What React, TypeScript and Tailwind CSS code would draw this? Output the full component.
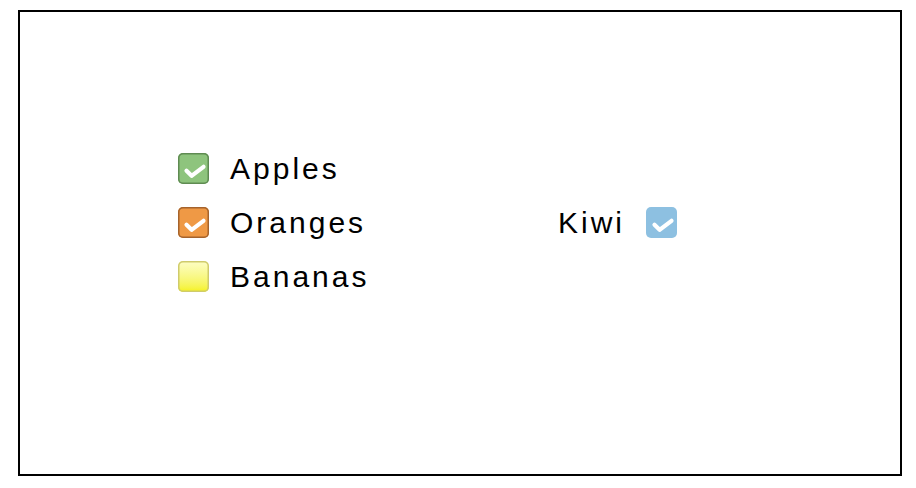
import React from 'react';

type Fruit = {
    label: string;
    checked: boolean;
    box: string;
};

const LEFT: Fruit[] = [
    { label: 'Apples', checked: true, box: 'shadow-[inset_0_0_0_1.5px_#5f8b52] bg-[#8ec47d]' },
    { label: 'Oranges', checked: true, box: 'shadow-[inset_0_0_0_1.5px_#a5632c] bg-[#ef9945]' },
    { label: 'Bananas', checked: false, box: 'shadow-[inset_0_0_0_1.5px_#cfcb6c] bg-gradient-to-b from-[#fdfdc4] to-[#f5f200]' },
];

// white tick drawn over the coloured box
const Check = () => (
    <svg viewBox="0 0 31 31" className="block h-[31px] w-[31px] shrink-0">
        <polyline
            points="8.5,17.8 13.6,22.8 25.5,13.8"
            fill="none"
            stroke="white"
            strokeWidth="4.2"
            strokeLinecap="round"
            strokeLinejoin="round"
        />
    </svg>
);

const Box = ({ checked, box }: { checked: boolean; box: string }) => (
    <span className={`flex h-[31px] w-[31px] shrink-0 items-center justify-center rounded-[5px] ${box}`}>
        {checked && <Check />}
    </span>
);

const App: React.FC = () => {
    return (
        <div className="h-[488px] w-[916px] bg-white pl-[18px] pt-[10px] font-['Liberation_Sans',Arial,sans-serif] text-black">
            <div className="box-border flex h-[466px] w-[884px] items-start border-2 border-black pl-[158px] pt-[129px]">
                <div className="flex w-[380px] flex-col">
                    {LEFT.map((f) => (
                        <div key={f.label} className="flex h-[54px] items-center gap-[21px]">
                            <Box checked={f.checked} box={f.box} />
                            <span className="pt-[2px] text-[30px] leading-none tracking-[3px]">{f.label}</span>
                        </div>
                    ))}
                </div>
                <div className="mt-[54px] flex h-[54px] items-center gap-[21px]">
                    <span className="pt-[2px] text-[30px] leading-none tracking-[3px]">Kiwi</span>
                    <Box checked box="bg-[#8dc0e1]" />
                </div>
            </div>
        </div>
    );
};

export default App;
